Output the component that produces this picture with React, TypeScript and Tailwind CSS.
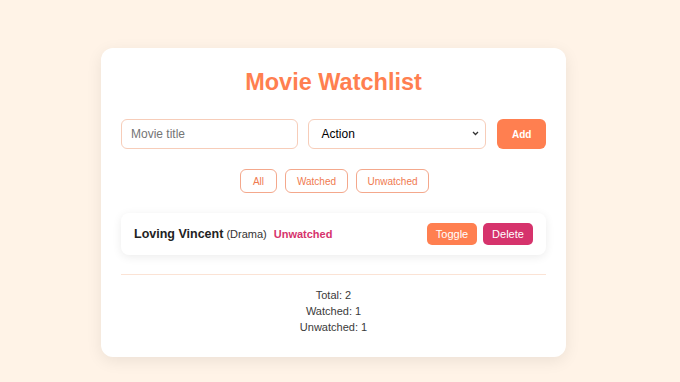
export default function App() {
  const stats = { total: 2, watched: 1, unwatched: 1 };

  return (
    <div className="min-h-[382px] w-full bg-[#fff3e7] pt-[48px] font-['Liberation_Sans',Arial,sans-serif]">
      <div className="ml-[101px] w-[465px] rounded-[12px] bg-white px-5 pt-[20px] pb-[22px] shadow-[0_4px_16px_rgba(0,0,0,0.08)]">
        <h1 className="text-center text-[23.5px] font-bold leading-[28px] text-[#ff7f50]">
          Movie Watchlist
        </h1>

        <div className="mt-[23px] flex items-center gap-[10px]">
          <input
            type="text"
            placeholder="Movie title"
            className="h-[30px] w-[179px] rounded-[6px] border border-[#f7cdb9] bg-white px-[9px] text-[12px] text-black placeholder:text-[#757575] outline-none"
          />
          <div className="relative">
            <select className="h-[30px] w-[178px] appearance-none rounded-[6px] border border-[#f7cdb9] bg-white px-[12px] text-[12px] text-black outline-none">
              <option>Action</option>
              <option>Drama</option>
              <option>Comedy</option>
            </select>
            <svg
              className="pointer-events-none absolute right-[7px] top-[12px]"
              width="7"
              height="5"
              viewBox="0 0 7 5"
              fill="none"
            >
              <path d="M1 1l2.5 2.5L6 1" stroke="#333" strokeWidth="1.3" />
            </svg>
          </div>
          <button className="ml-[1px] h-[30px] w-[49px] rounded-[6px] bg-[#ff7f50] text-[10px] font-bold text-white">
            Add
          </button>
        </div>

        <div className="mt-[20px] flex justify-center gap-[8px] pl-[2px]">
          <button className="h-[24px] w-[37px] rounded-[6px] border border-[#f4a88c] bg-white text-[10px] text-[#f07a50]">
            All
          </button>
          <button className="h-[24px] w-[63px] rounded-[6px] border border-[#f4a88c] bg-white text-[10px] text-[#f07a50]">
            Watched
          </button>
          <button className="h-[24px] w-[73px] rounded-[6px] border border-[#f4a88c] bg-white text-[10px] text-[#f07a50]">
            Unwatched
          </button>
        </div>

        <div className="mt-[20px] flex h-[42px] items-center justify-between rounded-[8px] bg-white pl-[13px] pr-[13px] shadow-[0_2px_10px_rgba(0,0,0,0.08)]">
          <div className="flex items-center">
            <span className="text-[12.5px] font-bold text-[#222]">Loving Vincent</span>
            <span className="ml-[3px] text-[11px] text-[#333]">(Drama)</span>
            <span className="ml-[7px] text-[11px] font-bold text-[#d6336c]">Unwatched</span>
          </div>
          <div className="flex items-center gap-[6px]">
            <button className="h-[22px] w-[50px] rounded-[5px] bg-[#ff7f50] text-[11px] text-white">
              Toggle
            </button>
            <button className="h-[22px] w-[50px] rounded-[5px] bg-[#d6336c] text-[11px] text-white">
              Delete
            </button>
          </div>
        </div>

        <div className="mt-[19px] border-t border-[#fbe3d5]" />

        <div className="mt-[12px] text-center text-[11px] leading-[16px] text-[#3a3a3a]">
          <p>Total: {stats.total}</p>
          <p>Watched: {stats.watched}</p>
          <p>Unwatched: {stats.unwatched}</p>
        </div>
      </div>
    </div>
  );
}
